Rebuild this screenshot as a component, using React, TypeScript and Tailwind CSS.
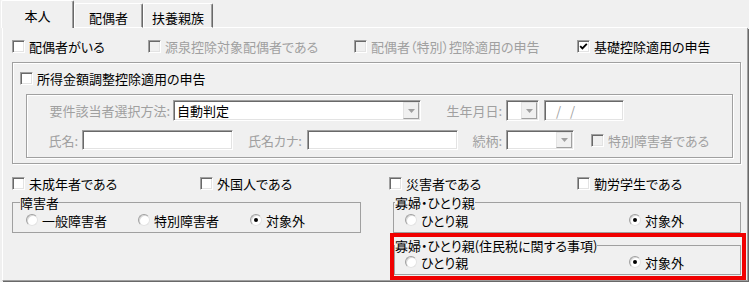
import React from "react";

const sunken =
  "border border-t-[#a0a0a0] border-l-[#a0a0a0] border-r-white border-b-white shadow-[inset_1px_1px_0_#696969,inset_-1px_-1px_0_#e3e3e3]";

function CheckBox({ checked = false, disabled = false }: { checked?: boolean; disabled?: boolean }) {
  return (
    <span
      className={
        disabled
          ? "flex items-center justify-center w-[13px] h-[13px] shrink-0 bg-[#f0f0f0] border border-t-[#a0a0a0] border-l-[#a0a0a0] border-r-white border-b-white shadow-[inset_1px_1px_0_#696969,inset_-1px_-1px_0_#e3e3e3]"
          : "flex items-center justify-center w-[13px] h-[13px] shrink-0 bg-white border border-t-[#a0a0a0] border-l-[#a0a0a0] border-r-white border-b-white shadow-[inset_1px_1px_0_#696969,inset_-1px_-1px_0_#e3e3e3]"
      }
    >
      {checked && (
        <svg width="9" height="9" viewBox="0 0 9 9">
          <path d="M1.2 4.2 L3.4 6.4 L7.8 1.8" fill="none" stroke="#000" strokeWidth="1.8" />
        </svg>
      )}
    </span>
  );
}

function Radio({ checked = false }: { checked?: boolean }) {
  return (
    <span className="flex items-center justify-center w-[12px] h-[12px] shrink-0 rounded-full bg-white border border-t-[#a0a0a0] border-l-[#a0a0a0] border-r-[#e3e3e3] border-b-[#e3e3e3] shadow-[inset_1px_1px_0_#d8d8d8]">
      {checked && <span className="w-[4px] h-[4px] rounded-full bg-black" />}
    </span>
  );
}

function DropButton() {
  return (
    <div className="w-[16px] flex items-center justify-center bg-[#f0f0f0] border border-t-[#e3e3e3] border-l-[#e3e3e3] border-r-[#a0a0a0] border-b-[#a0a0a0]">
      <svg width="7" height="4" viewBox="0 0 7 4">
        <path d="M0 0H7L3.5 4Z" fill="#a0a0a0" />
      </svg>
    </div>
  );
}

function CheckItem({
  label,
  checked = false,
  disabled = false,
}: {
  label: string;
  checked?: boolean;
  disabled?: boolean;
}) {
  return (
    <div className={disabled ? "flex items-center gap-[4px] text-[#a0a0a0]" : "flex items-center gap-[4px]"}>
      <CheckBox checked={checked} disabled={disabled} />
      <span className="whitespace-nowrap">{label}</span>
    </div>
  );
}

function RadioItem({ label, checked = false }: { label: string; checked?: boolean }) {
  return (
    <div className="flex items-center gap-[4px]">
      <Radio checked={checked} />
      <span className="whitespace-nowrap">{label}</span>
    </div>
  );
}

export default function App() {
  return (
    <div className="w-[749px] h-[282px] overflow-hidden bg-[#f0f0f0] text-black text-[13px] leading-[13px] font-['Noto_Sans_CJK_JP','Noto_Sans',sans-serif] [font-feature-settings:'palt']">
      {/* Tabs */}
      <div className="flex items-end h-[28px] pl-[1px]">
        <div className="w-[73px] h-[28px] flex justify-center pt-[8px] border-l border-t border-r border-l-white border-t-white border-r-[#696969] rounded-t-[2px] shadow-[inset_-1px_0_0_#a0a0a0]">
          本人
        </div>
        <div className="w-[69px] h-[25px] flex justify-center pt-[7px] border border-l-white border-t-white border-r-[#696969] border-b-white rounded-t-[2px] shadow-[inset_-1px_0_0_#a0a0a0]">
          配偶者
        </div>
        <div className="w-[70px] h-[25px] flex justify-center pt-[7px] border border-l-white border-t-white border-r-[#696969] border-b-white rounded-t-[2px] shadow-[inset_-1px_0_0_#a0a0a0]">
          扶養親族
        </div>
        <div className="flex-1 h-[1px] bg-white mr-[2px]" />
      </div>

      {/* Panel */}
      <div className="ml-[2px] w-[746px] h-[253px] flex flex-col border-l border-r border-b border-l-white border-r-[#a0a0a0] border-b-[#a0a0a0] shadow-[1px_1px_0_#696969]">
        {/* Row 1 */}
        <div className="flex items-center h-[16px] mt-[10px] pl-[9px]">
          <div className="w-[136px]">
            <CheckItem label="配偶者がいる" />
          </div>
          <div className="w-[206px]">
            <CheckItem label="源泉控除対象配偶者である" disabled />
          </div>
          <div className="w-[223px]">
            <CheckItem label="配偶者（特別）控除適用の申告" disabled />
          </div>
          <div>
            <CheckItem label="基礎控除適用の申告" checked />
          </div>
        </div>

        {/* 所得金額調整控除 box */}
        <div className="mt-[8px] ml-[9px] w-[729px] h-[102px] flex flex-col border border-[#a0a0a0] shadow-[inset_1px_1px_0_#fff,1px_1px_0_#fff]">
          <div className="mt-[7px] h-[16px] pl-[7px] flex items-center">
            <CheckItem label="所得金額調整控除適用の申告" />
          </div>
          <div className="mt-[8px] ml-[13px] w-[707px] h-[64px] flex flex-col border border-[#a0a0a0] shadow-[inset_1px_1px_0_#fff,1px_1px_0_#fff] text-[#a0a0a0]">
            {/* Row A */}
            <div className="mt-[5px] h-[21px] flex items-center">
              <div className="w-[146px] pr-[3px] text-right whitespace-nowrap">要件該当者選択方法:</div>
              <div className={`${sunken} bg-white w-[248px] h-[21px] p-[1px] flex items-stretch`}>
                <div className="flex-1 flex items-center pl-[2px] text-black">自動判定</div>
                <DropButton />
              </div>
              <div className="w-[85px] pr-[4px] text-right whitespace-nowrap">生年月日:</div>
              <div className={`${sunken} bg-white w-[33px] h-[21px] p-[1px] flex items-stretch`}>
                <div className="flex-1" />
                <DropButton />
              </div>
              <div className={`${sunken} bg-white ml-[5px] w-[80px] h-[21px] flex items-center text-[#a0a0a0]`}>
                <span className="ml-[11px]">/</span>
                <span className="ml-[9px]">/</span>
              </div>
            </div>
            {/* Row B */}
            <div className="mt-[9px] h-[20px] flex items-center">
              <div className="w-[55px] pr-[4px] text-right whitespace-nowrap">氏名:</div>
              <div className={`${sunken} bg-white w-[151px] h-[20px]`} />
              <div className="w-[74px] pr-[5px] text-right whitespace-nowrap">氏名カナ:</div>
              <div className={`${sunken} bg-white w-[151px] h-[20px]`} />
              <div className="w-[48px] pr-[4px] text-right whitespace-nowrap">続柄:</div>
              <div className={`${sunken} bg-white w-[68px] h-[20px] p-[1px] flex items-stretch`}>
                <div className="flex-1" />
                <DropButton />
              </div>
              <div className="ml-[17px]">
                <CheckItem label="特別障害者である" disabled />
              </div>
            </div>
          </div>
        </div>

        {/* Row 3 */}
        <div className="flex items-center h-[16px] mt-[11px] pl-[9px]">
          <div className="w-[188px]">
            <CheckItem label="未成年者である" />
          </div>
          <div className="w-[189px]">
            <CheckItem label="外国人である" />
          </div>
          <div className="w-[188px]">
            <CheckItem label="災害者である" />
          </div>
          <div>
            <CheckItem label="勤労学生である" />
          </div>
        </div>

        {/* Groups */}
        <div className="mt-[5px] flex items-start">
          <fieldset className="ml-[9px] w-[349px] h-[37px] border border-[#a0a0a0]">
            <legend className="ml-[7px] leading-[13px]">障害者</legend>
            <div className="mt-[3px] h-[16px] pl-[13px] flex items-center">
              <div className="w-[112px]">
                <RadioItem label="一般障害者" />
              </div>
              <div className="w-[112px]">
                <RadioItem label="特別障害者" />
              </div>
              <RadioItem label="対象外" checked />
            </div>
          </fieldset>

          <div className="ml-[29px] w-[356px] flex flex-col">
            <fieldset className="ml-[3px] w-[348px] h-[37px] border border-[#a0a0a0]">
              <legend className="ml-[1px] leading-[13px]">寡婦・ひとり親</legend>
              <div className="mt-[3px] h-[16px] pl-[11px] flex items-center">
                <div className="w-[224px]">
                  <RadioItem label="ひとり親" />
                </div>
                <RadioItem label="対象外" checked />
              </div>
            </fieldset>
            <div className="w-[356px] h-[47px] border-[4px] border-[#f00000]">
              <fieldset className="mt-[2px] w-[347px] h-[36px] border border-[#a0a0a0]">
                <legend className="leading-[13px]">寡婦・ひとり親(住民税に関する事項)</legend>
                <div className="mt-[2px] h-[16px] pl-[10px] flex items-center">
                  <div className="w-[224px]">
                    <RadioItem label="ひとり親" />
                  </div>
                  <RadioItem label="対象外" checked />
                </div>
              </fieldset>
            </div>
          </div>
        </div>
      </div>
    </div>
  );
}
